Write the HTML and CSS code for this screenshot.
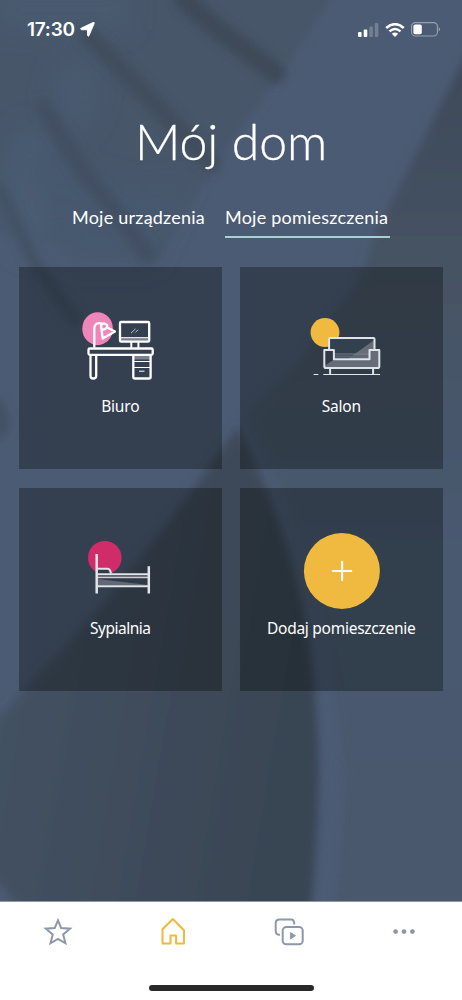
FILE: index.html
```html
<!DOCTYPE html>
<html lang="pl">
<head>
<meta charset="utf-8">
<title>Mój dom</title>
<link rel="stylesheet" href="styles.css">
</head>
<body>
<div class="app">
  <svg class="backdrop" viewBox="0 0 462 902" preserveAspectRatio="none" aria-hidden="true">
    <defs>
      <filter id="soft" x="-20%" y="-20%" width="140%" height="140%"><feGaussianBlur stdDeviation="5"/></filter>
      <filter id="softer" x="-50%" y="-50%" width="200%" height="200%"><feGaussianBlur stdDeviation="12"/></filter>
      <linearGradient id="fold" x1="0" y1="0" x2="1" y2="0.25"><stop offset="0" stop-color="#465466"/><stop offset=".5" stop-color="#404d5d"/><stop offset="1" stop-color="#394553"/></linearGradient>
      <linearGradient id="side" x1="0" y1="0" x2="0" y2="1"><stop offset="0" stop-color="#3c4858"/><stop offset=".25" stop-color="#455263"/><stop offset=".6" stop-color="#485a70"/><stop offset="1" stop-color="#49586b"/></linearGradient>
    </defs>
    <rect width="462" height="902" fill="#4c5b74"/>
    <g filter="url(#soft)">
      <path d="M-20-20H345L276 82L215 165L158 260L-20 230Z" fill="#475769"/>
      <path d="M480 30L458 70L415 155L375 235L360 280L300 360L245 415L280 490L312 580L330 680L345 780L335 920H480Z" fill="url(#side)"/>
      <path d="M-20 390Q-5 380 10 418Q14 440-20 445Z" fill="#435165"/>
    </g>
    <g filter="url(#softer)">
      <ellipse cx="75" cy="95" rx="24" ry="36" fill="#485a70"/>
      <ellipse cx="30" cy="190" rx="28" ry="65" fill="#485b72"/>
      <path d="M-10-10H130V30H0Z" fill="#485a70"/>
      <path d="M140 190L190 180L150 265H70L20 150Z" fill="#47586e"/>
    </g>
    <g filter="url(#soft)" fill="none" stroke-linecap="round">
      <path d="M184 0L220 31L276 73" stroke="#3c4858" stroke-width="20"/>
      <path d="M88 35L156 105L212 164" stroke="#404d5d" stroke-width="18"/>
      <path d="M44 108L82 170L124 223L148 255" stroke="#435062" stroke-width="18"/>
      <path d="M0 190L34 262L75 320" stroke="#435164" stroke-width="12"/>
    </g>
    <g filter="url(#soft)">
      <path d="M238 426Q181 507 105 602L0 716L-20 740V865Q5 888 32 925H309Q325 790 314 680Q304 560 238 426Z" fill="url(#fold)"/>
      <path d="M323 690Q341 780 322 912" fill="none" stroke="#4b5b74" stroke-width="11"/>
    </g>
  </svg>

  <header class="status">
    <div class="clock">17:30
      <svg width="15" height="15" viewBox="0 0 15 15"><path d="M13 .6Q14.8-.1 14.1 1.7L9 13.7Q8.2 15 7.5 13.3V7.8L1.6 7.7Q-.2 7 1.3 6Z" fill="#fff" stroke="#fff" stroke-width=".9"/></svg>
    </div>
    <div class="signals">
      <svg width="21" height="14" viewBox="0 0 21 14" fill="#fff"><rect x="0" y="9" width="3.6" height="5" rx="1"/><rect x="5.7" y="6.5" width="3.6" height="7.5" rx="1"/><g opacity=".22"><rect x="11.3" y="3.5" width="3.6" height="10.5" rx="1"/><rect x="16.8" y="0" width="3.6" height="14" rx="1"/></g></svg>
      <svg width="20" height="14" viewBox="0 0 20 14" fill="none" stroke="#fff" stroke-width="2.5"><path d="M1.2 5Q10-2.7 18.8 5"/><path d="M4.5 8.4Q10 3.7 15.5 8.4"/><path d="M10 14L6.8 10.8Q10 8.3 13.2 10.8Z" fill="#fff" stroke="none"/></svg>
      <svg width="30" height="15" viewBox="0 0 30 15"><rect x=".6" y=".6" width="25.8" height="13.4" rx="3.7" fill="none" stroke="#fff" stroke-opacity=".42" stroke-width="1.1"/><rect x="2.4" y="2.5" width="8.4" height="9.7" rx="1.8" fill="#fff"/><path d="M27.7 5Q30.3 7.3 27.7 9.6Z" fill="#fff" opacity=".45"/></svg>
    </div>
  </header>

  <h1 class="title">Mój dom</h1>

  <nav class="tabs">
    <a class="tab tab-devices">Moje urządzenia</a>
    <a class="tab tab-rooms active">Moje pomieszczenia</a>
  </nav>

  <main class="rooms">
    <section class="card">
      <svg class="art" viewBox="0 0 100 90">
        <ellipse cx="27.6" cy="28.7" rx="15.3" ry="16.5" fill="#f085b9"/>
        <g fill="none" stroke="#fff" stroke-width="2.3" stroke-linejoin="round">
          <path d="M24.3 47.5V29Q24.3 23 29.8 23.2L32.5 23.8"/>
          <path d="M31 25L34 23.2L37.2 25L37 27.5L45 31.6L32.7 38.5L31.5 29Z"/>
          <path d="M32 29Q35 30.5 37.2 27.2"/>
          <rect x="50" y="22" width="29.2" height="19.7" rx="1.2"/>
          <rect x="18.5" y="48.5" width="64.2" height="6.3" rx="1.3"/>
          <path d="M20.5 54.8V76Q20.5 78.5 23.3 78.5T26.2 76V54.8M63.3 54.8V77Q63.3 78.5 65 78.5H79Q80.6 78.5 80.6 77V54.8"/>
          <path d="M61.3 42V48M68.4 42V48" stroke-width="2"/>
        </g>
        <path d="M51 37.5H78V41H51ZM64 56H80V59.5H64Z" fill="#fff" opacity=".35"/>
        <path d="M51 37.7H78M64 61.5H80M64 67.5H80M69 71.2H74.5" stroke="#fff" stroke-width="1" fill="none"/>
        <path d="M61 33.2L65.5 28.8M65.5 32.4L68 29.7" stroke="#cdd1d7" stroke-width=".9"/>
      </svg>
      <div class="label biuro">Biuro</div>
    </section>
    <section class="card">
      <svg class="art" viewBox="-0.3 0 100 90">
        <circle cx="33.7" cy="32.5" r="14.4" fill="#f0b940"/>
        <path d="M37.8 38.3H83.2V50H78V60H42.8V50H37.8Z" fill="#33404e"/>
        <path d="M55 60L83 40V50H88V67H33V66L42 60Z" fill="#666c78"/>
        <path d="M43 54H78" stroke="#7b818c" stroke-width="1"/>
        <path d="M42.5 56.4H78" stroke="#5d6674" stroke-width="2"/>
        <g fill="none" stroke="#dfe3ea" stroke-width="2" stroke-linejoin="round">
          <path d="M37.8 49.5V39Q37.8 38 39 38H82.1Q83.2 38 83.2 39V49.5"/>
          <path d="M33 50H42.6V59.3H78.2V50H88V66.2Q88 68 86.5 68H34.5Q33 68 33 66.2Z"/>
          <path d="M38.8 68V74M81.8 68V74"/>
        </g>
        <path d="M32 74.5H88.8M22.3 74.5H27" stroke="#e4e6e9" stroke-width="1.2"/>
      </svg>
      <div class="label salon">Salon</div>
    </section>
    <section class="card">
      <svg class="art" viewBox="0 0 100 90">
        <circle cx="34.8" cy="35.7" r="16.8" fill="#d02c69"/>
        <path d="M27.8 46.5L38.5 46.5Q40.8 47.5 41.3 51H78V64H27.8Z" fill="#303b47"/>
        <path d="M28 54H78V56H28Z" fill="#77747f"/>
        <path d="M28 57L78 63H28Z" fill="#626975"/>
        <g fill="none" stroke="#e1e4e9"><path d="M26.7 32V71.5M78.8 44.2V71.5" stroke-width="2.5"/><path d="M27 46.8H37.5Q40 46.8 41 51.5" stroke-width="2"/><path d="M27 52.2H79M27 64.2H79" stroke-width="2"/><path d="M27 55.7H79" stroke-width="1"/></g>
      </svg>
      <div class="label sypialnia">Sypialnia</div>
    </section>
    <section class="card">
      <svg class="art" viewBox="-0.3 0 100 90"><circle cx="50.6" cy="49" r="38" fill="#f0b940"/><path d="M41.6 49H60M50.8 39.8V58.2" stroke="#fff" stroke-width="2.1" stroke-linecap="round"/></svg>
      <div class="label dodaj">Dodaj pomieszczenie</div>
    </section>
  </main>

  <footer class="dock">
    <div class="dock-items">
      <a class="item"><svg width="30" height="30" viewBox="0 0 30 30" fill="none" stroke="#8c97a8" stroke-width="2"><path d="M15 3.3L18.2 11.1L27 11.7L20.2 17.4L22.4 26.3L15 22L7.5 26.3L9.7 17.4L2.8 11.7L11.7 11.1Z"/></svg></a>
      <a class="item"><svg width="30" height="30" viewBox="0 0 30 30" fill="none" stroke="#f0b940" stroke-width="2.2" stroke-linejoin="round"><path d="M3.8 27V12.1L14.6 1.3L26.4 13.1V27H18.1V18.6H12.2V27Z" transform="translate(.9 .8) scale(.95)"/></svg></a>
      <a class="item"><svg width="30" height="30" viewBox="0 0 30 30" fill="none" stroke="#8c97a8" stroke-width="2"><path d="M6 17.8Q1.7 17.8 1.7 13.9V6.3Q1.7 2.6 5.4 2.6H17.2Q20.3 2.6 20.3 7.5"/><rect x="8.7" y="10.1" width="20" height="17.2" rx="3.5"/><path d="M16.5 15.5V22L21.6 18.7Z" fill="#8c97a8" stroke-width=".8" stroke-linejoin="round"/></svg></a>
      <a class="item"><svg width="30" height="30" viewBox="0 0 30 30" fill="#8c97a8"><circle cx="6.6" cy="14.6" r="2.4"/><circle cx="15" cy="14.6" r="2.4"/><circle cx="23.4" cy="14.6" r="2.4"/></svg></a>
    </div>
    <div class="home-bar"></div>
  </footer>
</div>
</body>
</html>
```
FILE: styles.css
```css
* { box-sizing: border-box; }
body { margin: 0; background: #4c5b74; font-family: Lato, "Noto Sans", sans-serif; color: #fff; }
.app { position: relative; width: 462px; height: 1000px; display: flex; flex-direction: column; overflow: hidden; isolation: isolate; }
.backdrop { position: absolute; inset: 0; width: 462px; height: 902px; z-index: -1; }

.status { height: 59px; padding: 0 21px 0 27px; display: flex; justify-content: space-between; align-items: center; }
.clock { display: flex; align-items: center; gap: 5px; font: 600 19px/24px Inter, sans-serif; letter-spacing: -0.25px; }
.signals { display: flex; align-items: center; gap: 6px; }

.title { margin: 49px 0 0; height: 66px; text-align: center; font-weight: 300; font-size: 50px; line-height: 66px; letter-spacing: -0.1px; -webkit-text-stroke: 0.3px #fff; }
.tabs { display: flex; justify-content: center; gap: 20px; margin-top: 29px; height: 35px; }
.tab { height: 35px; font-size: 18px; line-height: 28px; white-space: nowrap; letter-spacing: 0.23px; }
.tab-devices { width: 133px; }
.tab-rooms { width: 165px; }
.active { border-bottom: 2.5px solid #a9d1d5; }

.rooms { display: grid; grid-template-columns: 202.5px 202.5px; grid-auto-rows: 202.5px; gap: 19px 18.5px; padding: 0 19px; margin-top: 28.5px; }
.card { background: rgba(0, 2, 0, 0.31); display: flex; flex-direction: column; align-items: center; padding-top: 33.5px; }
.art { width: 100px; height: 90px; flex: none; }
.label { margin-top: 4px; font: 400 15.5px/24px "Noto Sans", sans-serif; white-space: nowrap; letter-spacing: -0.2px; }
.sypialnia { letter-spacing: -0.5px; }
.dodaj { letter-spacing: -0.27px; }

.dock { margin-top: auto; height: 99px; background: #fff; border-top: 1px solid #8d97a5; display: flex; flex-direction: column; align-items: center; }
.dock-items { width: 100%; display: grid; grid-template-columns: repeat(4, 1fr); padding-top: 14.5px; }
.item { display: flex; justify-content: center; }
.home-bar { width: 165px; height: 6px; border-radius: 4px; background: #292929; margin-top: auto; margin-bottom: 9.5px; }
```
